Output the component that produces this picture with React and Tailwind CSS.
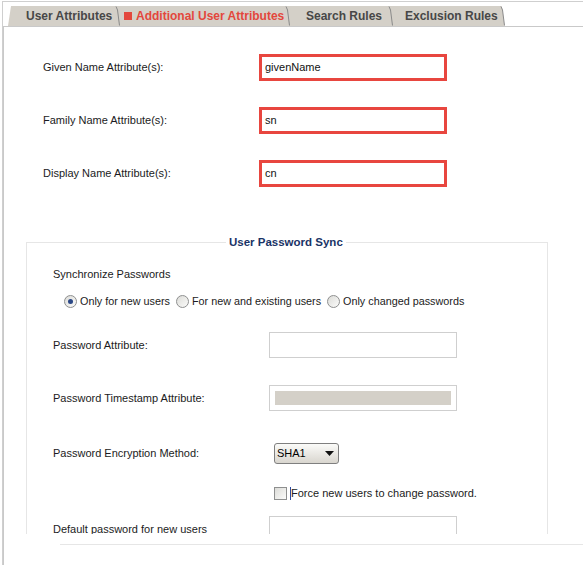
import React from "react";

function Sep({ last }) {
  return (
    <svg width="6" height="20" viewBox="0 0 6 20" className="block shrink-0">
      {last ? (
        <path d="M0 0 L1.5 0 L2.5 4 L4.5 20 L0 20 Z" fill="#d4d0c8" />
      ) : (
        <rect x="0" y="0" width="6" height="20" fill="#d4d0c8" />
      )}
      <path d="M1 0.5 L2.5 4 L4.5 19.5" stroke="#8a8a8a" strokeWidth="1" fill="none" />
    </svg>
  );
}

function Radio({ checked }) {
  return (
    <span className="relative inline-flex w-[13px] h-[13px] rounded-full border border-[#8e8f8f] bg-gradient-to-br from-[#dcdcd8] to-[#fbfbfa] items-center justify-center shrink-0">
      {checked && <span className="w-[5px] h-[5px] rounded-full bg-[#2b4785]" />}
    </span>
  );
}

function TopRow({ label, value, last }) {
  return (
    <div className={`flex items-center h-[27px] ${last ? "" : "mb-[26px]"}`}>
      <div className="w-[255px] pl-[39px] text-[11px] text-[#1b1b22]">{label}</div>
      <div className="w-[188px] h-[27px] border-[3px] border-[#e8463f] pl-[3px] flex items-center text-[11px] text-[#111]">
        {value}
      </div>
    </div>
  );
}

export default function App() {
  const font = { fontFamily: '"Liberation Sans", Arial, sans-serif' };
  return (
    <div className="w-[583px] h-[565px] overflow-hidden bg-white relative" style={font}>
      <div className="ml-[2px] mt-[1px] h-[564px] border-t border-l border-[#cfcfcf] flex flex-col">
        {/* Tabs */}
        <div className="h-[24px] pt-[4px] pl-[5px] flex shrink-0">
          <div className="w-[107px] h-[20px] bg-[#d4d0c8] [clip-path:polygon(3px_0,100%_0,100%_100%,0_100%)] pl-[18px] flex items-center text-[12px] font-bold text-[#474747]">
            User Attributes
          </div>
          <Sep />
          <div className="w-[164px] h-[20px] bg-[#d4d0c8] pl-[3px] flex items-center text-[12px] font-bold text-[#e3473c]">
            <span className="w-[8px] h-[8px] bg-[#e3473c] mr-[4px] shrink-0" />
            Additional User Attributes
          </div>
          <Sep />
          <div className="w-[97px] h-[20px] bg-[#d4d0c8] pl-[15px] flex items-center text-[12px] font-bold text-[#474747]">
            Search Rules
          </div>
          <Sep />
          <div className="w-[106px] h-[20px] bg-[#d4d0c8] pl-[11px] flex items-center text-[12px] font-bold text-[#474747]">
            Exclusion Rules
          </div>
          <Sep last />
        </div>

        {/* Content */}
        <div className="flex-1 border-t border-l border-[#c9c9c9] flex flex-col">
          <div className="h-[507px] overflow-hidden pt-[27px]">
            <TopRow label="Given Name Attribute(s):" value="givenName" />
            <TopRow label="Family Name Attribute(s):" value="sn" />
            <TopRow label="Display Name Attribute(s):" value="cn" last />

            <fieldset className="mt-[48px] ml-[22px] w-[522px] border border-[#e6e6e6] pl-[26px] pb-[40px]">
              <legend className="ml-[173px] px-[3px] text-[11.5px] leading-[14px] font-bold text-[#1a3466]">
                User Password Sync
              </legend>
              <div className="pt-[18px] text-[11px] leading-[14px] text-[#1b1b22]">Synchronize Passwords</div>

              <div className="mt-[13px] h-[14px] pl-[11px] flex items-center text-[10.8px] text-[#1b1b22]">
                <Radio checked />
                <span className="ml-[3px] mr-[6px]">Only for new users</span>
                <Radio />
                <span className="ml-[3px] mr-[6px]">For new and existing users</span>
                <Radio />
                <span className="ml-[3px]">Only changed passwords</span>
              </div>

              <div className="mt-[24px] flex items-center h-[26px]">
                <div className="w-[216px] text-[11px] text-[#1b1b22]">Password Attribute:</div>
                <div className="w-[188px] h-[26px] border border-[#cfcfcf] bg-white" />
              </div>

              <div className="mt-[27px] flex items-center h-[26px]">
                <div className="w-[216px] text-[11px] text-[#1b1b22]">Password Timestamp Attribute:</div>
                <div className="w-[188px] h-[26px] border border-[#cfcfcf] bg-white p-[5px]">
                  <div className="w-full h-full bg-[#d4d0c8]" />
                </div>
              </div>

              <div className="mt-[29px] flex items-center h-[26px]">
                <div className="w-[216px] text-[11px] text-[#1b1b22]">Password Encryption Method:</div>
                <div className="ml-[5px] w-[65px] h-[21px] border border-[#7f7f7f] rounded-[3px] bg-gradient-to-b from-[#fbfbf9] to-[#d9d6cf] flex items-center pl-[2px] pr-[4px] justify-between text-[11px] text-black">
                  <span>SHA1</span>
                  <svg width="9" height="5" viewBox="0 0 9 5">
                    <path d="M0 0 L9 0 L4.5 5 Z" fill="#111" />
                  </svg>
                </div>
              </div>

              <div className="mt-[20px] h-[14px] flex items-center pl-[221px] text-[11px] text-[#1b1b22]">
                <span className="w-[13px] h-[13px] border border-[#8e8f8f] bg-gradient-to-br from-[#dcdcd8] to-[#fbfbfa] shrink-0" />
                <span className="ml-[3px] pl-0 border-l border-[#2c4aa0] leading-[13px]">Force new users to change password.</span>
              </div>

              <div className="mt-[16px] flex items-center h-[26px]">
                <div className="w-[216px] text-[11px] text-[#1b1b22]">Default password for new users</div>
                <div className="w-[188px] h-[26px] border border-[#cfcfcf] bg-white" />
              </div>
            </fieldset>
          </div>
          <div className="mt-[10px] ml-[56px] border-t border-[#e6e6e6]" />
        </div>
      </div>
    </div>
  );
}
